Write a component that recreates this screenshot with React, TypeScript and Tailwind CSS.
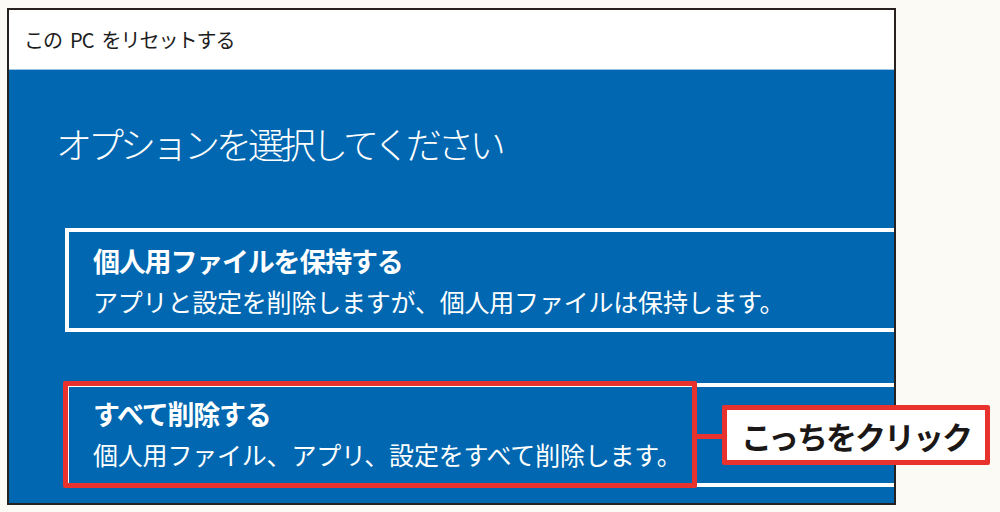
import React from 'react';

const jp = '[font-family:"Noto_Sans_CJK_JP","Noto_Sans",sans-serif]';

type OptionProps = {
  title: string;
  description: string;
  topPad: string;
};

const OptionBox = ({ title, description, topPad }: OptionProps) => (
  <div className={`w-[900px] h-[104px] border-4 border-white pl-[24px] ${topPad} text-white`}>
    <div className="text-[27px] font-bold leading-[40px] tracking-[-1.2px] whitespace-nowrap">
      {title}
    </div>
    <div className="text-[25px] leading-[40px] tracking-[-0.2px] whitespace-nowrap">
      {description}
    </div>
  </div>
);

export default function App() {
  return (
    <div className={`relative w-[1000px] h-[512px] bg-[#fbfaf4] overflow-hidden ${jp}`}>
      {/* reset window */}
      <div className="ml-[7px] mt-[8px] w-[889px] h-[497px] border-2 border-[#27221f] overflow-hidden flex flex-col">
        <div className="h-[60px] shrink-0 bg-white border-b border-[#9cc3e3] flex items-center pl-[15px]">
          <span className="text-[20px] text-[#1c1c1c] tracking-[-1px] whitespace-nowrap">
            この<span className="ml-[8px]">PC</span><span className="ml-[8px]">をリセットする</span>
          </span>
        </div>
        <div className="flex-1 bg-[#0067b0] pt-[50px]">
          <h1 className="ml-[47px] text-[36px] font-light leading-[46px] tracking-[-4px] text-white whitespace-nowrap">
            オプションを選択してください
          </h1>
          <div className="ml-[56px] mt-[62px]">
            <OptionBox
              title="個人用ファイルを保持する"
              description="アプリと設定を削除しますが、個人用ファイルは保持します。"
              topPad="pt-[9px]"
            />
          </div>
          <div className="relative ml-[56px] mt-[51px]">
            <OptionBox
              title="すべて削除する"
              description="個人用ファイル、アプリ、設定をすべて削除します。"
              topPad="pt-[7px]"
            />
            <div className="absolute -left-[2px] -top-[2px] w-[634px] h-[107px] border-[5px] border-[#e8322d] rounded-[2px]" />
          </div>
        </div>
      </div>

      {/* callout */}
      <div className="absolute left-[696px] top-[434px] w-[28px] h-[5px] bg-[#e8322d]" />
      <div className="absolute left-[722px] top-[405px] w-[268px] h-[60px] border-[5px] border-[#e8322d] rounded-[2px] bg-white flex items-center justify-center">
        <span className="text-[31px] font-bold text-[#1a1716] tracking-[-2px] leading-none">こっちをクリック</span>
      </div>
    </div>
  );
}
